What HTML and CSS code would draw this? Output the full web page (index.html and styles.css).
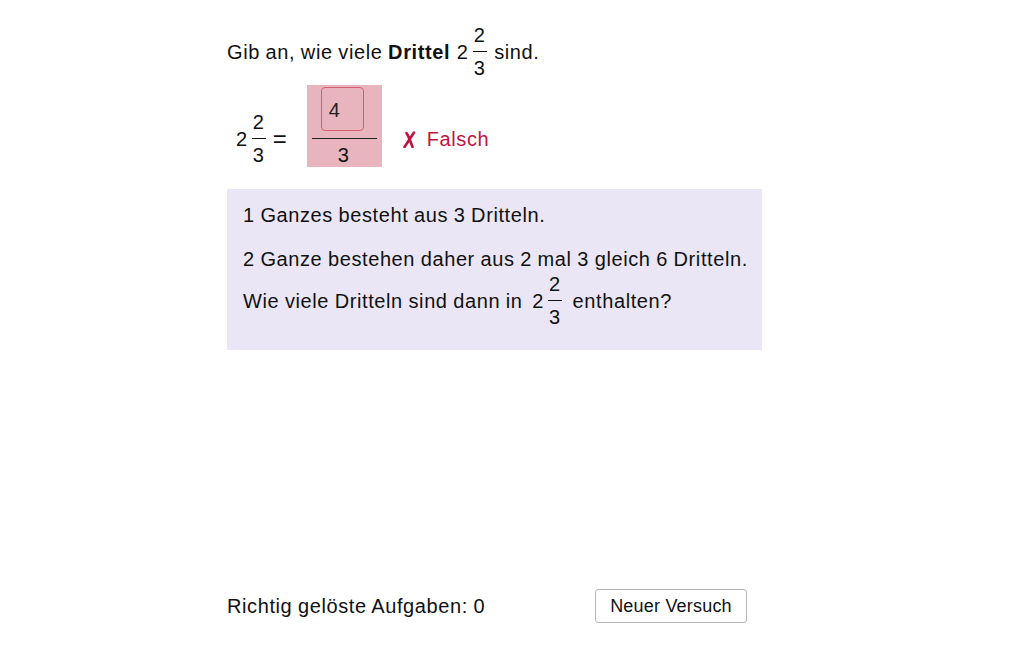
FILE: index.html
```html
<!DOCTYPE html>
<html>
<head>
  <title>Drittel</title>
  <link rel="stylesheet" href="styles.css">
</head>
<body>
<div class="task">
  <p class="question">
    Gib an, wie viele <b>Drittel</b>
    <span class="mixed">2<span class="frac"><span>2</span><span class="bar"></span><span>3</span></span></span>
    sind.
  </p>

  <div class="answer-row">
    <span class="mixed">2<span class="frac"><span>2</span><span class="bar"></span><span>3</span></span><span class="equals">=</span></span>
    <div class="answer wrong">
      <div class="input-box">4</div>
      <div class="answer-bar"></div>
      <div class="denom">3</div>
    </div>
    <span class="result">
      <svg width="13" height="17" viewBox="0 0 13 17"><path d="M1.5 16 L11 1.5 M3.5 2 Q6 6 9.5 16" stroke="#c2133f" stroke-width="2.6" fill="none" stroke-linecap="round"/></svg>
      Falsch
    </span>
  </div>

  <div class="hint">
    <p>1 Ganzes besteht aus 3 Dritteln.</p>
    <p>2 Ganze bestehen daher aus 2 mal 3 gleich 6 Dritteln.</p>
    <p class="last">Wie viele Dritteln sind dann in
      <span class="mixed">2<span class="frac"><span>2</span><span class="bar"></span><span>3</span></span></span>
      enthalten?</p>
  </div>

  <div class="footer-row">
    <span class="score">Richtig gelöste Aufgaben: 0</span>
    <button class="retry">Neuer Versuch</button>
  </div>
</div>
</body>
</html>
```

FILE: styles.css
```css
body {
  margin: 0;
  font-family: "Liberation Sans", Arial, sans-serif;
  font-size: 20px;
  letter-spacing: 0.6px;
  word-spacing: -0.5px;
  color: #111;
  background: #fff;
}

.task {
  width: 535px;
  margin-left: 227px;
  padding-top: 28px;
}

p {
  margin: 0;
}

.question {
  line-height: 48px;
}

.mixed {
  display: inline-flex;
  align-items: center;
  gap: 3px;
  vertical-align: middle;
  position: relative;
  top: -2px;
  margin: -6px 0 -6px 1px;
  line-height: 24px;
}

.frac {
  display: inline-flex;
  flex-direction: column;
  align-items: center;
  padding: 0 2px 0 1px;
}

.frac .bar {
  width: 14px;
  height: 1px;
  background: #111;
  margin: 4px 0;
}

.answer-row {
  display: flex;
  align-items: flex-start;
  height: 82px;
  margin-top: 9px;
  padding-left: 9px;
}

.answer-row .mixed {
  top: 0;
  margin: 25px 0 0;
}

.equals {
  margin-left: 2px;
  font-size: 24px;
  letter-spacing: 0;
}

.answer {
  width: 75px;
  height: 82px;
  margin-left: 20px;
  background: #e8b5be;
  display: flex;
  flex-direction: column;
  align-items: flex-start;
  line-height: 24px;
}

.input-box {
  width: 43px;
  height: 44px;
  margin: 2px 0 0 14px;
  box-sizing: border-box;
  border: 1px solid #d2616f;
  border-radius: 4px;
  padding: 10px 0 0 7px;
  line-height: 24px;
  color: #222;
}

.answer-bar {
  width: 65px;
  height: 1px;
  background: #222;
  margin: 7px 0 0 5px;
}

.denom {
  margin: 4px 0 0 31px;
}

.result {
  display: flex;
  align-items: center;
  gap: 11px;
  margin: 42px 0 0 21px;
  line-height: 24px;
  color: #c2133f;
}

.hint {
  margin-top: 22px;
  height: 161px;
  box-sizing: border-box;
  background: #eae6f6;
  padding: 4px 16px 0;
}

.hint p {
  line-height: 44px;
  white-space: nowrap;
}

.hint .last {
  margin-top: -2px;
}

.hint .mixed {
  margin: -8px 3px -8px 4px;
}

.footer-row {
  display: flex;
  align-items: center;
  margin-top: 239px;
}

.score {
  width: 368px;
}

.retry {
  width: 152px;
  height: 34px;
  font-family: inherit;
  font-size: 18px;
  letter-spacing: 0.2px;
  color: #111;
  background: #fff;
  border: 1px solid #b5b5b5;
  border-radius: 3px;
}
```
